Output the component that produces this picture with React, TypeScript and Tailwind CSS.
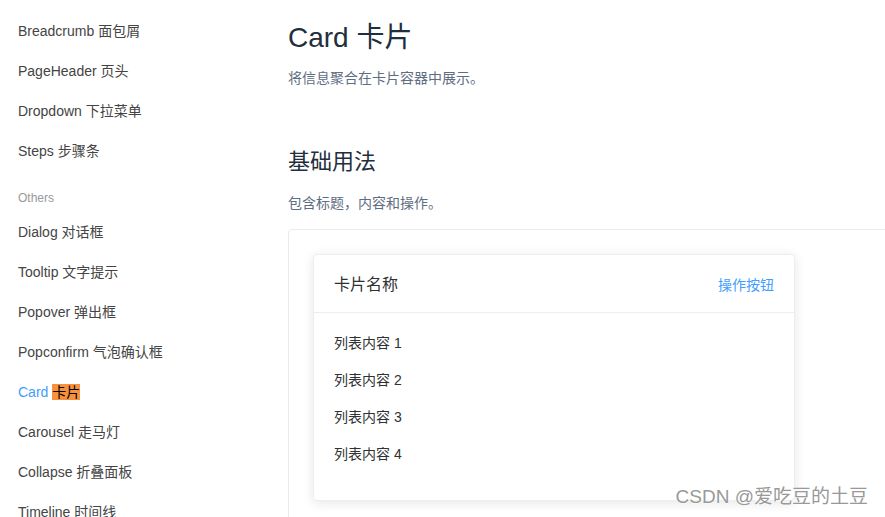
import React from "react";

const font = { fontFamily: '"Liberation Sans", Arial, "Noto Sans CJK SC", sans-serif' };

const groupA = ["Breadcrumb 面包屑", "PageHeader 页头", "Dropdown 下拉菜单", "Steps 步骤条"];
const groupB = ["Dialog 对话框", "Tooltip 文字提示", "Popover 弹出框", "Popconfirm 气泡确认框"];
const groupC = ["Carousel 走马灯", "Collapse 折叠面板", "Timeline 时间线"];

function Item({ label }: { label: string }) {
  return <div className="h-[40px] leading-[40px] text-[14px] text-[#444] whitespace-nowrap">{label}</div>;
}

export default function App() {
  return (
    <div className="relative w-[885px] h-[517px] overflow-hidden bg-white flex" style={font}>
      <aside className="w-[288px] shrink-0 pl-[18px] pt-[11px]">
        {groupA.map((l) => (
          <Item key={l} label={l} />
        ))}
        <div className="h-[41px] pt-[19px] leading-[16px] text-[12px] text-[#999]">Others</div>
        {groupB.map((l) => (
          <Item key={l} label={l} />
        ))}
        <div className="h-[40px] leading-[40px] text-[14px] whitespace-nowrap">
          <span className="text-[#409eff]">Card </span>
          <span className="bg-[#f7913d] text-black">卡片</span>
        </div>
        {groupC.map((l) => (
          <Item key={l} label={l} />
        ))}
      </aside>
      <main className="flex-1 min-w-0">
        <h2 className="mt-[17px] h-[42px] leading-[42px] text-[28px] text-[#1f2f3d] font-normal">Card 卡片</h2>
        <p className="mt-[9px] leading-[21px] text-[14px] text-[#5e6d82]">将信息聚合在卡片容器中展示。</p>
        <h3 className="mt-[56px] leading-[33px] text-[22px] text-[#1f2f3d] font-normal">基础用法</h3>
        <p className="mt-[15px] leading-[21px] text-[14px] text-[#5e6d82]">包含标题，内容和操作。</p>
        <div className="mt-[15px] w-[680px] border border-[#ebebeb] rounded-[4px] p-[24px]">
          <div className="w-[482px] bg-white border border-[#ebeef5] rounded-[4px] shadow-[0_2px_12px_0_rgba(0,0,0,0.1)] text-[#303133]">
            <div className="h-[58px] px-[20px] pt-[3px] border-b border-[#ebeef5] flex items-center justify-between">
              <span className="text-[16px] leading-[22px]">卡片名称</span>
              <span className="text-[14px] text-[#409eff]">操作按钮</span>
            </div>
            <div className="px-[20px] pt-[21px] pb-[18px]">
              {[1, 2, 3, 4].map((n) => (
                <div key={n} className="text-[14px] leading-[19px] mb-[18px]">列表内容 {n}</div>
              ))}
            </div>
          </div>
        </div>
      </main>
      <div
        className="absolute right-[17px] bottom-[9px] text-[19px] leading-[22px] text-[#999] whitespace-nowrap"
        style={{ textShadow: "0 0 2px #fff, 0 0 2px #fff" }}
      >
        CSDN @爱吃豆的土豆
      </div>
    </div>
  );
}
